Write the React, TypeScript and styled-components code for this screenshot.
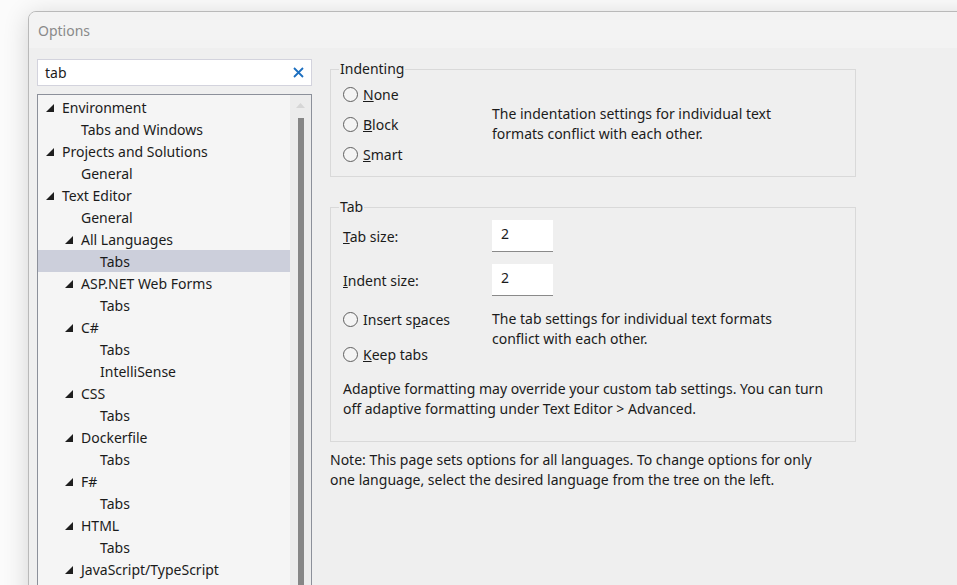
import styled, { createGlobalStyle } from "styled-components"

const GlobalStyle = createGlobalStyle`
  html, body {
    margin: 0;
    padding: 0;
    background: #ffffff;
    overflow: hidden;
  }
  * {
    box-sizing: border-box;
  }
`

const Page = styled.div`
  width: 957px;
  height: 585px;
  overflow: hidden;
  padding: 11px 0 0 28px;
  background: #fbfbfb;
  font-family: "Noto Sans", "Open Sans", sans-serif;
  font-size: 14px;
  color: #1b1b1b;
`

const Window = styled.div`
  width: 1000px;
  height: 640px;
  border: 1px solid #b9b9b9;
  border-radius: 8px 0 0 0;
  background: #efefef;
  box-shadow: 0 4px 26px rgba(0, 0, 0, 0.16);
  display: flex;
  flex-direction: column;
  overflow: hidden;
`

const TitleBar = styled.div`
  height: 36px;
  flex: none;
  display: flex;
  align-items: center;
  padding-left: 9px;
  background: #f3f3f3;
  color: #8a8a8a;
  font-size: 14px;
`

const Body = styled.div`
  flex: 1;
  display: flex;
  gap: 18px;
  padding: 0 0 0 8px;
`

const LeftPane = styled.div`
  width: 275px;
  flex: none;
  display: flex;
  flex-direction: column;
  gap: 8px;
  padding-top: 11px;
`

const Search = styled.div`
  height: 27px;
  display: flex;
  align-items: center;
  justify-content: space-between;
  padding: 0 7px 0 7px;
  background: #ffffff;
  border: 1px solid #d3d3dd;
  font-size: 14px;
`

const Tree = styled.div`
  flex: 1;
  display: flex;
  border: 1px solid #8c909a;
  background: #f5f5f5;
`

const Rows = styled.div`
  flex: 1;
  padding-top: 1px;
`

const Row = styled.div<{ $level: number; $selected?: boolean }>`
  height: 22px;
  display: flex;
  align-items: center;
  padding-left: ${(p) => 24 + p.$level * 19}px;
  background: ${(p) => (p.$selected ? "#cccfdb" : "transparent")};
  font-size: 14px;
  white-space: nowrap;
`

const Arrow = styled.svg`
  width: 8px;
  height: 8px;
  margin-left: -16px;
  margin-right: 8px;
  margin-top: 1px;
`

const ScrollTrack = styled.div`
  width: 21px;
  flex: none;
  display: flex;
  flex-direction: column;
  align-items: center;
  background: #ececec;
  padding-top: 8px;
  gap: 10px;
`

const ScrollThumb = styled.div`
  width: 6px;
  flex: 1;
  background: #868686;
`

const RightPane = styled.div`
  width: 526px;
  flex: none;
  padding-top: 11px;
  display: flex;
  flex-direction: column;
`

const Group = styled.fieldset<{ $pb: number; $mt?: number }>`
  margin: ${(p) => p.$mt ?? 0}px 0 0 0;
  padding: 0 12px ${(p) => p.$pb}px 12px;
  border: 1px solid #d9d9d9;
  min-width: 0;
`

const Legend = styled.legend`
  padding: 0 1px;
  margin-left: -4px;
  line-height: 20px;
  font-size: 14px;
`

const Split = styled.div<{ $mt?: number }>`
  display: flex;
  align-items: center;
  margin-top: ${(p) => p.$mt ?? 0}px;
`

const LeftCol = styled.div<{ $gap: number }>`
  width: 149px;
  flex: none;
  display: flex;
  flex-direction: column;
  gap: ${(p) => p.$gap}px;
`

const Radio = styled.label<{ $h: number }>`
  height: ${(p) => p.$h}px;
  display: flex;
  align-items: center;
  gap: 5px;
  font-size: 14px;
`

const Circle = styled.span`
  width: 15px;
  height: 15px;
  border-radius: 50%;
  border: 1px solid #5f5f5f;
  background: #f4f4f4;
  flex: none;
`

const Text = styled.div<{ $mt?: number }>`
  font-size: 14px;
  line-height: 20px;
  white-space: nowrap;
  margin-top: ${(p) => p.$mt ?? 0}px;
`

const FieldLabel = styled.div`
  width: 149px;
  flex: none;
  font-size: 14px;
`

const NumberBox = styled.div`
  width: 61px;
  height: 32px;
  background: #ffffff;
  border-bottom: 1px solid #8a8a8a;
  padding: 4px 0 0 9px;
  font-size: 14px;
`

const Note = styled.div`
  margin-top: 8px;
  font-size: 14px;
  line-height: 20px;
  white-space: nowrap;
`

type Node = { label: string; level: number; open?: boolean; selected?: boolean }

const nodes: Node[] = [
  { label: "Environment", level: 0, open: true },
  { label: "Tabs and Windows", level: 1 },
  { label: "Projects and Solutions", level: 0, open: true },
  { label: "General", level: 1 },
  { label: "Text Editor", level: 0, open: true },
  { label: "General", level: 1 },
  { label: "All Languages", level: 1, open: true },
  { label: "Tabs", level: 2, selected: true },
  { label: "ASP.NET Web Forms", level: 1, open: true },
  { label: "Tabs", level: 2 },
  { label: "C#", level: 1, open: true },
  { label: "Tabs", level: 2 },
  { label: "IntelliSense", level: 2 },
  { label: "CSS", level: 1, open: true },
  { label: "Tabs", level: 2 },
  { label: "Dockerfile", level: 1, open: true },
  { label: "Tabs", level: 2 },
  { label: "F#", level: 1, open: true },
  { label: "Tabs", level: 2 },
  { label: "HTML", level: 1, open: true },
  { label: "Tabs", level: 2 },
  { label: "JavaScript/TypeScript", level: 1, open: true },
]

function RadioItem({ h, k, rest, pre }: { h: number; k: string; rest: string; pre?: string }) {
  return (
    <Radio $h={h}>
      <Circle />
      <span>
        {pre}
        <u>{k}</u>
        {rest}
      </span>
    </Radio>
  )
}

export default function App() {
  return (
    <Page>
      <GlobalStyle />
      <Window>
        <TitleBar>Options</TitleBar>
        <Body>
          <LeftPane>
            <Search>
              <span>tab</span>
              <svg width="11" height="11" viewBox="0 0 11 11">
                <path d="M1 1L10 10M10 1L1 10" stroke="#1c6fc0" strokeWidth="1.8" />
              </svg>
            </Search>
            <Tree>
              <Rows>
                {nodes.map((n, i) => (
                  <Row key={i} $level={n.level} $selected={n.selected}>
                    {n.open && (
                      <Arrow viewBox="0 0 8 8">
                        <polygon points="8,0 8,8 0,8" fill="#1e1e1e" />
                      </Arrow>
                    )}
                    {n.label}
                  </Row>
                ))}
              </Rows>
              <ScrollTrack>
                <svg width="9" height="5" viewBox="0 0 9 5">
                  <polygon points="4.5,0 9,5 0,5" fill="#d6d6d6" />
                </svg>
                <ScrollThumb />
              </ScrollTrack>
            </Tree>
          </LeftPane>
          <RightPane>
            <Group $pb={7}>
              <Legend>Indenting</Legend>
              <Split>
                <LeftCol $gap={0}>
                  <RadioItem h={30} k="N" rest="one" />
                  <RadioItem h={30} k="B" rest="lock" />
                  <RadioItem h={30} k="S" rest="mart" />
                </LeftCol>
                <Text>
                  The indentation settings for individual text
                  <br />
                  formats conflict with each other.
                </Text>
              </Split>
            </Group>
            <Group $pb={22} $mt={20}>
              <Legend>Tab</Legend>
              <Split $mt={3}>
                <FieldLabel>
                  <u>T</u>ab size:
                </FieldLabel>
                <NumberBox>2</NumberBox>
              </Split>
              <Split $mt={12}>
                <FieldLabel>
                  <u>I</u>ndent size:
                </FieldLabel>
                <NumberBox>2</NumberBox>
              </Split>
              <Split $mt={13}>
                <LeftCol $gap={15}>
                  <RadioItem h={20} pre="Insert s" k="p" rest="aces" />
                  <RadioItem h={20} k="K" rest="eep tabs" />
                </LeftCol>
                <Text $mt={-15}>
                  The tab settings for individual text formats
                  <br />
                  conflict with each other.
                </Text>
              </Split>
              <Text $mt={15}>
                Adaptive formatting may override your custom tab settings. You can turn
                <br />
                off adaptive formatting under Text Editor &gt; Advanced.
              </Text>
            </Group>
            <Note>
              Note: This page sets options for all languages. To change options for only
              <br />
              one language, select the desired language from the tree on the left.
            </Note>
          </RightPane>
        </Body>
      </Window>
    </Page>
  )
}
